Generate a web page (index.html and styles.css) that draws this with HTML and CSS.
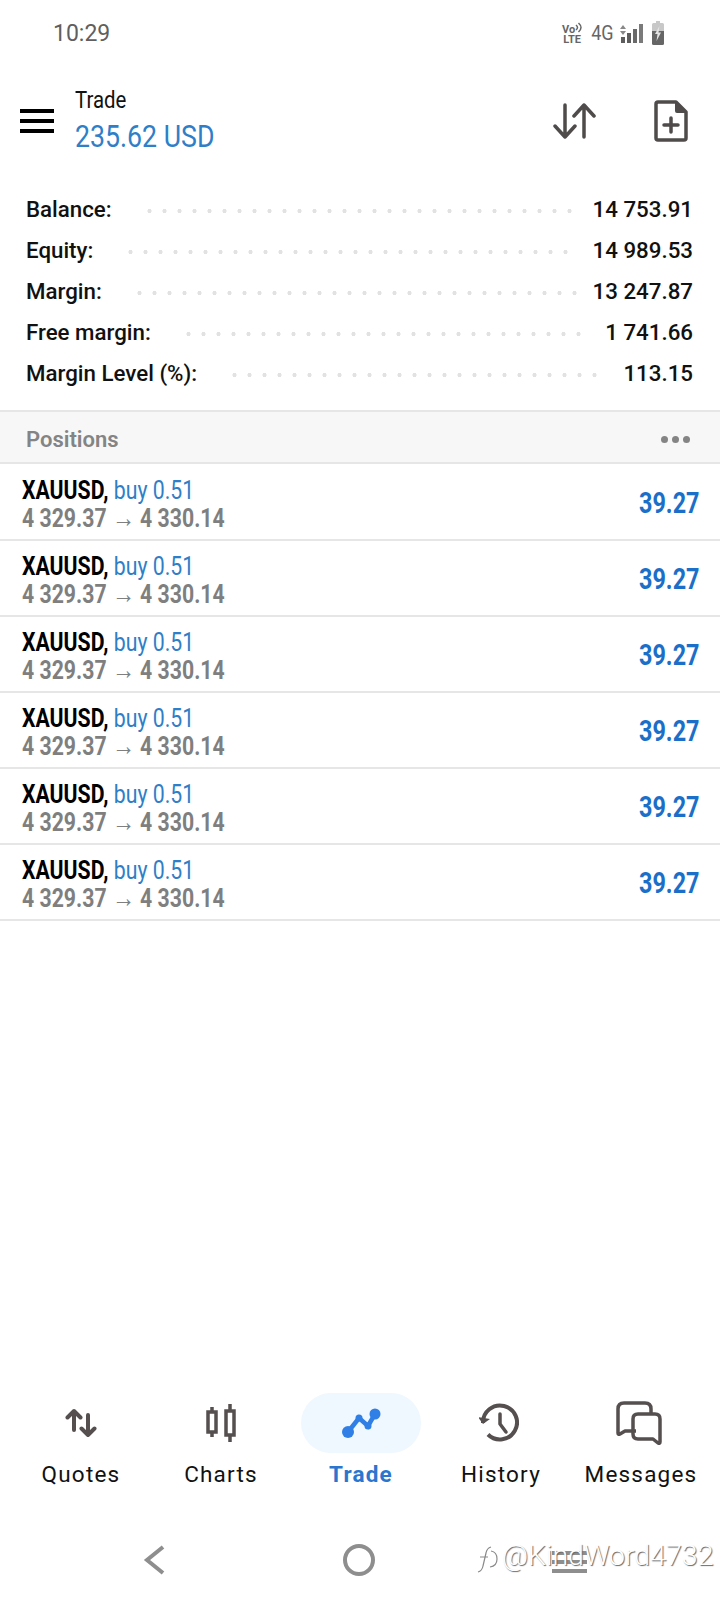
FILE: index.html
```html
<!DOCTYPE html>
<html lang="en">
	<head>
		<title>Trade</title>
		<link rel="stylesheet" href="styles.css">
	</head>
	<body>
		<div class="status">
			<span class="clock">10:29</span>
			<div class="status-icons">
				<span class="volte">Vo<svg width="7" height="11" viewBox="0 0 7 11" fill="none" stroke="#666" stroke-width="1.500"><path d="M1 3q3 2.500 0 5M3.500 1q5 4.500 0 9"/></svg><br>LTE</span>
				<span class="net">4G</span>
				<svg width="24" height="22" viewBox="0 0 24 22" fill="#5d5d5d">
					<path d="M3 3l3 4H0zM3 13l-3-4h6z" fill="#888"/>
					<rect x="1" y="15" width="4" height="6"/>
					<rect x="7" y="11" width="4" height="10"/>
					<rect x="13" y="7" width="4" height="14" fill="#6a6a6a"/>
					<rect x="19" y="2" width="4" height="19" fill="#7a7a7a"/>
				</svg>
				<svg width="12" height="24" viewBox="0 0 12 24">
					<path d="M4 0h4v2h2.500q1.500 0 1.500 1.500V10H0V3.500Q0 2 1.500 2H4z" fill="#c8c8c8"/>
					<path d="M0 10h12v12.500q0 1.500-1.500 1.500h-9Q0 24 0 22.500z" fill="#666"/>
					<path d="M7.500 5L3 13h2.500L4.500 20 9 11.500H6.500z" fill="#e4e4e4"/>
				</svg>
			</div>
		</div>

		<header class="topbar">
			<div class="burger"><i></i><i></i><i></i></div>
			<div class="title">
				<div class="title-top"><span class="narrow">Trade</span></div>
				<div class="title-sum"><span class="narrow">235.62 USD</span></div>
			</div>
			<div class="top-actions">
				<svg width="44" height="36" viewBox="0 0 44 36" fill="none" stroke="#4f4b4b" stroke-width="3.500" stroke-linecap="round" stroke-linejoin="round">
					<path d="M12 2v32M2 23l10 11 10-11"/>
					<path d="M31 34V2M21 13L31 2l10 11"/>
				</svg>
				<svg width="34" height="42" viewBox="0 0 34 42">
					<path d="M4 2h18l10 10v26q0 2-2 2H4q-2 0-2-2V4q0-2 2-2z" fill="none" stroke="#4f4b4b" stroke-width="3.500" stroke-linejoin="round"/>
					<path d="M21 2l11 11h-9q-2 0-2-2z" fill="#4f4b4b"/>
					<path d="M17 18v14M10 25h14" stroke="#4f4b4b" stroke-width="3.500" stroke-linecap="round"/>
				</svg>
			</div>
		</header>

		<section class="summary">
			<div class="sum-row"><span>Balance:</span><i class="dots"></i><b>14 753.91</b></div>
			<div class="sum-row"><span>Equity:</span><i class="dots"></i><b>14 989.53</b></div>
			<div class="sum-row"><span>Margin:</span><i class="dots"></i><b>13 247.87</b></div>
			<div class="sum-row"><span>Free margin:</span><i class="dots"></i><b>1 741.66</b></div>
			<div class="sum-row"><span>Margin Level (%):</span><i class="dots"></i><b>113.15</b></div>
		</section>

		<div class="pos-head">
			<span>Positions</span>
			<div class="more"><i></i><i></i><i></i></div>
		</div>

		<div class="positions">
			<div class="pos">
				<div class="pos-text">
					<div class="pos-line"><span class="narrow"><b>XAUUSD,</b> <em>buy 0.51</em></span></div>
					<div class="pos-line prices"><span class="narrow">4 329.37 <small>→</small> 4 330.14</span></div>
				</div>
				<div class="profit"><span class="narrow">39.27</span></div>
			</div>
			<div class="pos">
				<div class="pos-text">
					<div class="pos-line"><span class="narrow"><b>XAUUSD,</b> <em>buy 0.51</em></span></div>
					<div class="pos-line prices"><span class="narrow">4 329.37 <small>→</small> 4 330.14</span></div>
				</div>
				<div class="profit"><span class="narrow">39.27</span></div>
			</div>
			<div class="pos">
				<div class="pos-text">
					<div class="pos-line"><span class="narrow"><b>XAUUSD,</b> <em>buy 0.51</em></span></div>
					<div class="pos-line prices"><span class="narrow">4 329.37 <small>→</small> 4 330.14</span></div>
				</div>
				<div class="profit"><span class="narrow">39.27</span></div>
			</div>
			<div class="pos">
				<div class="pos-text">
					<div class="pos-line"><span class="narrow"><b>XAUUSD,</b> <em>buy 0.51</em></span></div>
					<div class="pos-line prices"><span class="narrow">4 329.37 <small>→</small> 4 330.14</span></div>
				</div>
				<div class="profit"><span class="narrow">39.27</span></div>
			</div>
			<div class="pos">
				<div class="pos-text">
					<div class="pos-line"><span class="narrow"><b>XAUUSD,</b> <em>buy 0.51</em></span></div>
					<div class="pos-line prices"><span class="narrow">4 329.37 <small>→</small> 4 330.14</span></div>
				</div>
				<div class="profit"><span class="narrow">39.27</span></div>
			</div>
			<div class="pos">
				<div class="pos-text">
					<div class="pos-line"><span class="narrow"><b>XAUUSD,</b> <em>buy 0.51</em></span></div>
					<div class="pos-line prices"><span class="narrow">4 329.37 <small>→</small> 4 330.14</span></div>
				</div>
				<div class="profit"><span class="narrow">39.27</span></div>
			</div>
		</div>

		<nav class="tabs">
			<div class="tab">
				<div class="tab-icon">
					<svg width="32" height="30" viewBox="0 0 32 30" fill="none" stroke="#554f4f" stroke-width="4" stroke-linecap="round" stroke-linejoin="round">
						<path d="M9 22V3M2.500 9.500L9 3l6.500 6.500"/>
						<path d="M23 7v20M16.500 20.500L23 27l6.500-6.500"/>
					</svg>
				</div>
				<span>Quotes</span>
			</div>
			<div class="tab">
				<div class="tab-icon">
					<svg width="30" height="38" viewBox="0 0 30 38" fill="none" stroke="#554f4f" stroke-width="3.500">
						<rect x="2" y="8" width="8" height="20"/>
						<rect x="20" y="7" width="8" height="24"/>
						<path d="M6 3v5M6 28v5M24 0v7M24 31v7"/>
					</svg>
				</div>
				<span>Charts</span>
			</div>
			<div class="tab active">
				<div class="tab-icon pill">
					<svg width="40" height="32" viewBox="0 0 40 32" fill="none">
						<path d="M7 25L18 11l9 8L34 7" stroke="#2f7fe6" stroke-width="4.500"/>
						<circle cx="7" cy="25" r="6" fill="#2f7fe6"/>
						<circle cx="18" cy="11" r="3.500" fill="#2f7fe6"/>
						<circle cx="27" cy="19" r="3.500" fill="#2f7fe6"/>
						<circle cx="34" cy="7" r="5.500" fill="#2f7fe6"/>
					</svg>
				</div>
				<span>Trade</span>
			</div>
			<div class="tab">
				<div class="tab-icon">
					<svg class="nudge" width="40" height="40" viewBox="0 0 40 40" fill="none" stroke="#554f4f" stroke-width="4">
						<path d="M4 20A17 17 0 1 1 9 31.500"/>
						<path d="M-1 14l5 7 7-5" stroke-width="0" fill="#554f4f"/>
						<path d="M21 11v10l6 8" stroke-width="3.500" stroke-linecap="round" stroke-linejoin="round"/>
					</svg>
				</div>
				<span>History</span>
			</div>
			<div class="tab">
				<div class="tab-icon">
					<svg class="nudge" width="46" height="44" viewBox="0 0 46 44" fill="none" stroke="#554f4f" stroke-width="3.500" stroke-linejoin="round">
						<path d="M20 30H9l-5 3q-2 1-2-1V8q0-6 6-6h21q6 0 6 6v5"/>
						<path d="M22 13h17q5 0 5 5v23q0 2-2 1l-5-4H22q-5 0-5-5V18q0-5 5-5z"/>
					</svg>
				</div>
				<span>Messages</span>
			</div>
		</nav>

		<div class="sysnav">
			<svg width="22" height="30" viewBox="0 0 22 30" fill="none" stroke="#8e8e8e" stroke-width="4">
				<path d="M20 2L4 15l16 13"/>
			</svg>
			<svg width="32" height="32" viewBox="0 0 32 32" fill="none" stroke="#8e8e8e" stroke-width="4">
				<circle cx="16" cy="16" r="14"/>
			</svg>
			<div class="recents"><i></i><i></i><i></i></div>
			<svg class="mark-logo" width="22" height="28" viewBox="0 0 22 28" fill="none" stroke="#8a8a8a" stroke-width="1.200">
				<path d="M1 27q4-1 5-6l3-13q1-5 5-6M3 12h8M14 6q6 1 6 8 0 7-7 8"/>
			</svg>
			<div class="watermark">@KindWord4732</div>
		</div>
	</body>
</html>
```

FILE: styles.css
```css
html, body {
	margin: 0;
	padding: 0;
}
body {
	width: 720px;
	height: 1600px;
	display: flex;
	flex-direction: column;
	background: #fff;
	font-family: Roboto, "Liberation Sans", sans-serif;
	color: #111;
	overflow: hidden;
}
.narrow {
	display: inline-block;
	white-space: nowrap;
	transform: scaleX(.85);
	transform-origin: left center;
}

.status {
	height: 66px;
	margin-bottom: 17px;
	display: flex;
	align-items: center;
	justify-content: space-between;
	padding: 0 56px 0 53px;
}
.clock {
	font-size: 23px;
	color: #5f5f5f;
}
.status-icons {
	display: flex;
	align-items: center;
	gap: 8px;
}
.volte {
	font-size: 11px;
	line-height: 10px;
	font-weight: 700;
	color: #666;
	text-align: center;
}
.net {
	font-size: 20px;
	color: #666;
	transform: scaleX(.9);
	margin-right: -3px;
}

.topbar {
	height: 76px;
	display: flex;
	align-items: center;
	padding: 0 32px 0 20px;
}
.burger {
	width: 34px;
	display: flex;
	flex-direction: column;
	gap: 6px;
	margin-right: 21px;
}
.burger i {
	display: block;
	height: 4px;
	background: #000;
}
.title {
	flex: 1;
}
.title-top {
	font-size: 24px;
	line-height: 30px;
	color: #111;
}
.title-sum {
	font-size: 32px;
	line-height: 42px;
	color: #2f7fc8;
}
.title-sum .narrow {
	transform: scaleX(.835);
}
.top-actions {
	display: flex;
	align-items: center;
	gap: 57px;
}

.summary {
	padding: 29px 27px 17px 26px;
}
.sum-row {
	height: 41px;
	display: flex;
	align-items: center;
	font-size: 22.300px;
	font-weight: 500;
	color: #111;
}
.sum-row b {
	font-weight: 500;
}
.dots {
	flex: 1;
	height: 6px;
	margin: 4px 16px 0 30px;
	background: radial-gradient(circle, #e2e2e2 1.800px, transparent 2.300px) left center / 15px 6px repeat-x;
}

.pos-head {
	box-sizing: border-box;
	height: 54px;
	display: flex;
	align-items: center;
	justify-content: space-between;
	padding: 5px 30px 0 26px;
	background: #f7f7f7;
	border-top: 2px solid #e6e6e6;
	border-bottom: 2px solid #e6e6e6;
	font-size: 22px;
	font-weight: 600;
	color: #848484;
}
.more {
	display: flex;
	gap: 4px;
}
.more i {
	width: 7px;
	height: 7px;
	border-radius: 50%;
	background: #848484;
}

.positions {
	flex: 1;
	padding-top: 1px;
}
.pos {
	height: 74px;
	display: flex;
	align-items: center;
	justify-content: space-between;
	padding: 0 0 0 22px;
	border-bottom: 2px solid #e6e6e6;
}
.pos-text {
	padding-top: 5px;
}
.pos-line {
	font-size: 25px;
	line-height: 28px;
	height: 28px;
}
.pos-line b {
	font-weight: 700;
	color: #000;
}
.pos-line em {
	font-style: normal;
	color: #2f7fc8;
}
.prices {
	font-weight: 700;
	color: #7f7f7f;
}
.prices small {
	font-size: 27px;
	font-weight: 400;
	line-height: 20px;
}
.profit {
	width: 81px;
	font-size: 30px;
	font-weight: 700;
	color: #1c6fc8;
}
.profit .narrow {
	transform: scaleX(.78);
}

.tabs {
	height: 127px;
	display: flex;
	padding: 0 9px 0 11px;
}
.tab {
	width: 140px;
	display: flex;
	flex-direction: column;
	align-items: center;
	font-size: 22.500px;
	letter-spacing: 1.200px;
	color: #111;
}
.tab-icon {
	height: 60px;
	width: 120px;
	display: flex;
	align-items: center;
	justify-content: center;
	margin-bottom: 8px;
}
.nudge {
	margin-left: -4px;
}
.pill {
	background: #eff7ff;
	border-radius: 30px;
}
.active {
	font-weight: 700;
	color: #2a76cf;
}

.sysnav {
	position: relative;
	height: 80px;
	display: flex;
	align-items: center;
	padding: 0 133px 0 143px;
	justify-content: space-between;
}
.recents {
	width: 35px;
	display: flex;
	flex-direction: column;
	gap: 5px;
	margin-top: 4px;
}
.recents i {
	display: block;
	height: 4px;
	background: #8e8e8e;
}
.mark-logo {
	position: absolute;
	left: 477px;
	top: 25px;
}
.watermark {
	position: absolute;
	left: 502px;
	top: 19px;
	font-size: 28.500px;
	font-weight: 300;
	color: #fff;
	text-shadow: 1px 1px 1px #666;
	white-space: nowrap;
}
```
